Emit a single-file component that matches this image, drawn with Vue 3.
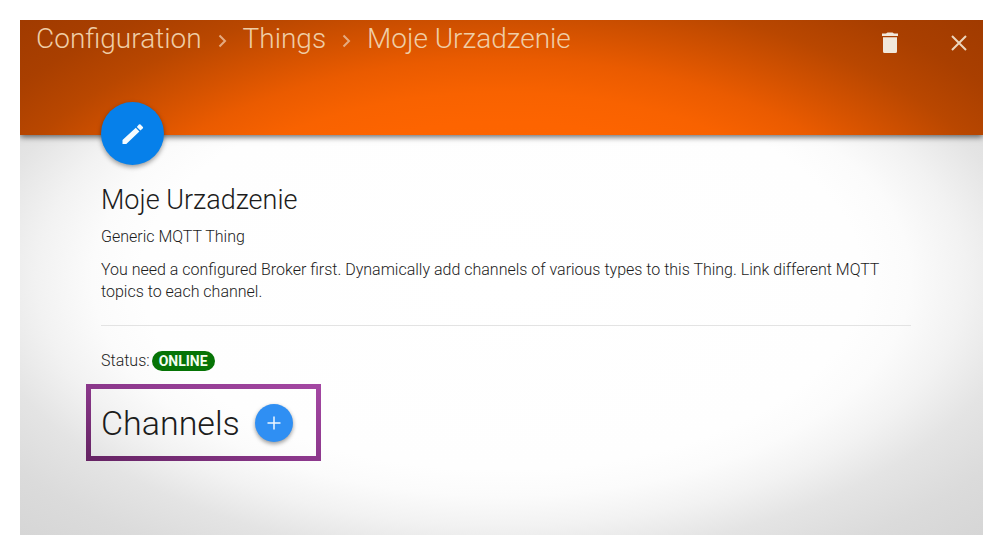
<script setup>
const parents = ['Configuration', 'Things']
const thing = {
  label: 'Moje Urzadzenie',
  type: 'Generic MQTT Thing',
  description:
    'You need a configured Broker first. Dynamically add channels of various types to this Thing. Link different MQTT topics to each channel.',
  status: 'ONLINE'
}
</script>

<template>
  <div class="page">
    <div class="panel">
      <header class="toolbar">
        <nav class="crumbs" aria-label="Breadcrumb">
          <template v-for="name in parents" :key="name">
            <a href="#" class="crumb">{{ name }}</a>
            <svg class="chevron" viewBox="0 0 9 14" aria-hidden="true">
              <path d="M1.500 1.500 7 7 1.500 12.500" />
            </svg>
          </template>
          <span class="crumb" aria-current="page">{{ thing.label }}</span>
        </nav>
        <div class="actions">
          <button type="button" class="tool" aria-label="Delete">
            <svg class="trash" viewBox="0 0 16 22" aria-hidden="true">
              <path d="M4 1.500 5.500.5h5l1.500 1H16V4H0V1.500zM1 5.200h14v14.300q0 1.500-1.500 1.500h-11Q1 21 1 19.500z" />
            </svg>
          </button>
          <button type="button" class="tool" aria-label="Close">
            <svg class="cross" viewBox="0 0 16 16" aria-hidden="true">
              <path d="M1 1 15 15M15 1 1 15" />
            </svg>
          </button>
        </div>
      </header>

      <main class="content">
        <button type="button" class="fab" aria-label="Edit">
          <svg class="pencil" viewBox="0 0 22 22" aria-hidden="true">
            <path d="M.5 17 13.800 4.800l3.600 3.800L4.300 21H.5zM14.800 3.900 16.900 1.600q.8-.8 1.600 0l2.400 2.400q.6.700-.2 1.400L18.400 7.600z" />
          </svg>
        </button>

        <h1 class="title">{{ thing.label }}</h1>
        <p class="text type">{{ thing.type }}</p>
        <p class="text">{{ thing.description }}</p>
        <hr class="rule" />
        <p class="text status">
          <span>Status:</span>
          <strong class="badge">{{ thing.status }}</strong>
        </p>

        <section class="channels">
          <h2 class="heading">Channels</h2>
          <button type="button" class="add" aria-label="Add channel">
            <svg class="plus" viewBox="0 0 14 14" aria-hidden="true">
              <path d="M7 .5v13M.5 7h13" />
            </svg>
          </button>
        </section>
      </main>
    </div>
  </div>
</template>

<style>
body {
  margin: 0;
  background: #fff;
}
</style>

<style scoped>
.page {
  box-sizing: border-box;
  display: flex;
  min-height: 100vh;
  padding: 20px;
  font-family: Roboto, "Liberation Sans", sans-serif;
  font-weight: 300;
  color: #1c1c1c;
}
.panel {
  flex: 1;
  display: flex;
  flex-direction: column;
  min-width: 0;
  overflow: hidden;
  background: radial-gradient(ellipse 72% 72% at 50% 50%, #fff 0%, #fefefe 52%, #fbfbfb 59%, #f2f2f2 67%, #e4e4e4 76%, #dbdbdb 87%, #d5d5d5 100%);
}
.toolbar {
  display: flex;
  justify-content: space-between;
  align-items: flex-start;
  height: 115px;
  background: radial-gradient(ellipse 72% 322% at 50% 224%, #ff6600 0%, #fd6400 42%, #f86200 50%, #ea5b00 59%, #d45200 67%, #b94700 77%, #a93f00 87%, #9f3a00 100%);
  box-shadow: 0 2px 6px rgba(0, 0, 0, 0.6);
}
.crumbs {
  display: flex;
  align-items: center;
  gap: 16px;
  padding-left: 16px;
}
.crumb {
  font-size: 28px;
  line-height: 38px;
  color: #efcda6;
  text-decoration: none;
  white-space: nowrap;
}
.chevron {
  width: 9px;
  height: 14px;
  margin-top: 4px;
  fill: none;
  stroke: #e5ab80;
  stroke-width: 2;
}
.actions {
  display: flex;
  gap: 29px;
  padding: 3px 4px 0 0;
}
.tool {
  display: grid;
  place-items: center;
  width: 40px;
  height: 40px;
  padding: 0;
  border: 0;
  background: none;
}
.trash {
  width: 16px;
  height: 22px;
  fill: #f1e8da;
}
.cross {
  width: 16px;
  height: 16px;
  stroke: #ecd6bc;
  stroke-width: 2;
}
.content {
  padding: 0 72px 0 81px;
}
.fab,
.add {
  display: grid;
  place-items: center;
  padding: 0;
  border: 0;
  border-radius: 50%;
}
.fab {
  position: relative;
  width: 63px;
  height: 63px;
  margin-top: -33px;
  background: #0680ea;
  box-shadow: 0 2px 5px rgba(0, 0, 0, 0.4);
}
.pencil {
  width: 22px;
  height: 22px;
  fill: #f4fbff;
}
.title {
  margin: 16px 0 0;
  font-size: 27px;
  line-height: 38px;
  font-weight: 300;
}
.text {
  margin: 0;
  font-size: 16px;
  line-height: 22px;
}
.type {
  margin: 7px 0 11px;
}
.rule {
  height: 1px;
  margin: 22px 0 24px;
  border: 0;
  background: #e3e3e3;
}
.status {
  display: flex;
  align-items: center;
  gap: 2px;
}
.badge {
  padding: 0 7px;
  border-radius: 10px;
  background: #067406;
  color: #f3fff0;
  font-size: 14px;
  line-height: 20px;
  font-weight: 700;
}
.channels {
  box-sizing: border-box;
  display: flex;
  align-items: center;
  gap: 15px;
  width: fit-content;
  height: 77px;
  margin: 12px 0 0 -15px;
  padding: 0 23px 0 10px;
  border: 5px solid;
  border-image: linear-gradient(20deg, #662464, #8c388c 50%, #a347a2) 1;
}
.heading {
  margin: 0;
  font-size: 34px;
  line-height: 48px;
  font-weight: 300;
}
.add {
  width: 38px;
  height: 38px;
  background: #2f8ff3;
  box-shadow: 0 2px 4px rgba(0, 0, 0, 0.4);
}
.plus {
  width: 14px;
  height: 14px;
  stroke: #eef8ff;
  stroke-width: 1.5;
}
</style>
